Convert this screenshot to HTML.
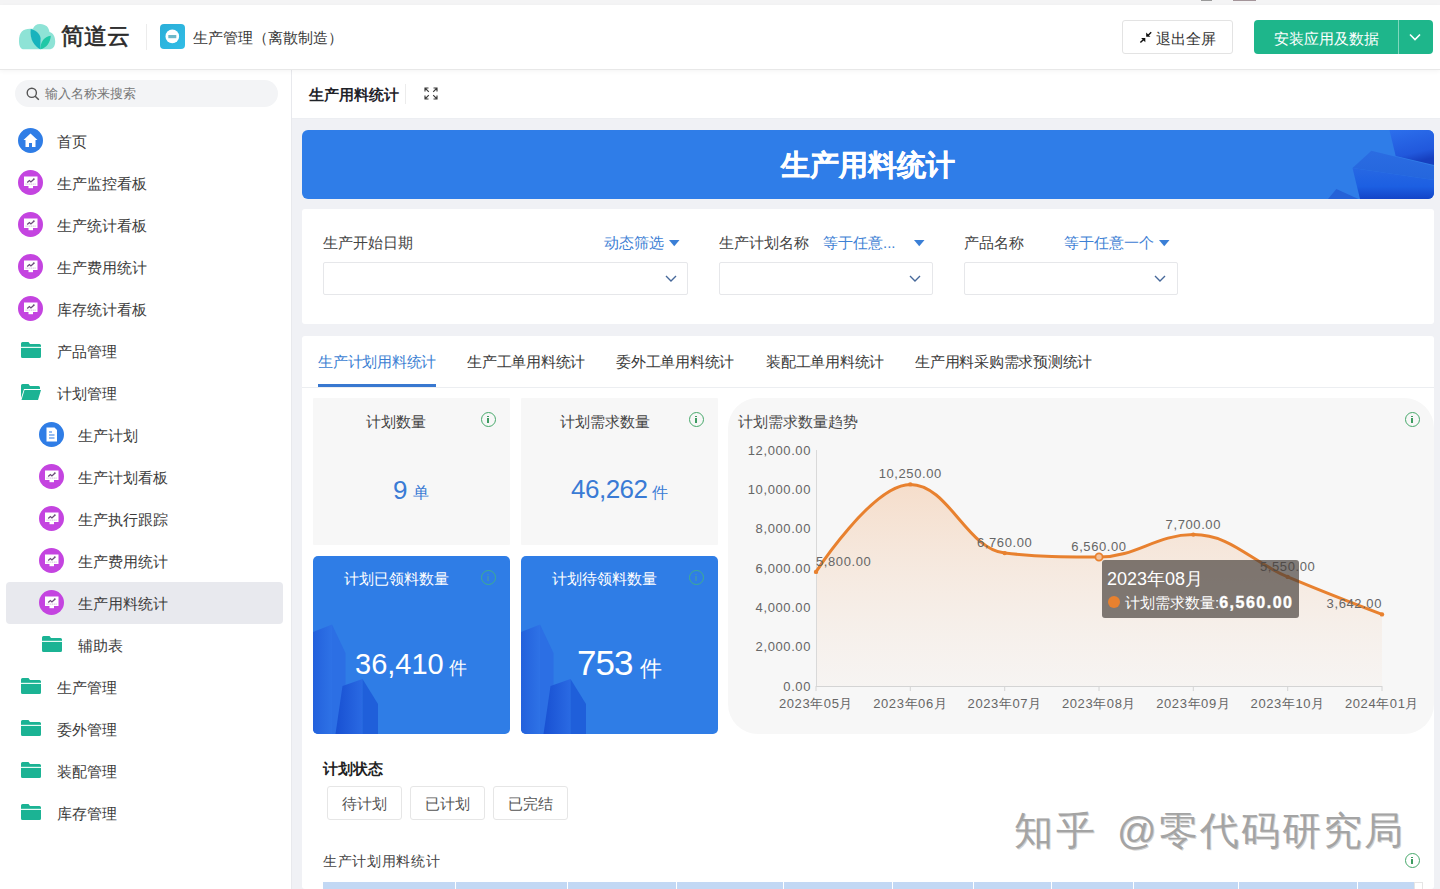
<!DOCTYPE html>
<html><head><meta charset="utf-8">
<style>
*{box-sizing:border-box;margin:0;padding:0}
html,body{width:1440px;height:889px;overflow:hidden;background:#fff;font-family:"Liberation Sans",sans-serif;color:#333}
div,span,svg{position:absolute}
.t{white-space:nowrap;line-height:1}
.side{font-size:15px;color:#3c3c3c}
.ic{width:25px;height:25px;border-radius:50%}
.pur{background:#c444e0}
.info{width:15px;height:15px;border:1.6px solid #47a96b;border-radius:50%}
.info:before{content:"";position:absolute;left:5.3px;top:2.6px;width:1.6px;height:1.6px;background:#3f9c62}
.info:after{content:"";position:absolute;left:5.3px;top:5.4px;width:1.6px;height:5px;background:#3f9c62}
.ax{font-size:13px;letter-spacing:0.6px;color:#666}
.binfo{border-color:#3fae8e}
.binfo:before,.binfo:after{background:#3d8fc0}
</style></head><body>
<div style="left:0;top:0;width:1440px;height:6px;background:#f4f4f5"></div>
<div style="left:1201px;top:0;width:11px;height:1px;background:#9a9a9a;z-index:5"></div><div style="left:1233px;top:0;width:23px;height:1px;background:#a4959a;z-index:5"></div>
<div style="left:0;top:5px;width:1440px;height:64px;background:#fff;box-shadow:0 1px 0 #e8e8e8,0 2px 5px rgba(0,0,0,0.05);z-index:3">
  <!-- logo -->
  <svg style="left:18px;top:18px" width="38" height="28" viewBox="18 23 38 28">
    <path d="M24 49.3 C20.5 49.3 19 46 19 41 C19 32 23 28.7 30 28.7 L33 28.7 C34 25.5 36.5 23.9 40 23.9 C46 23.9 49 27.5 49.5 32 C53.5 33 55.2 37 55.2 41.5 C55.2 46.5 53 49.3 49 49.3 Z" fill="#8ee3d6"/>
    <path d="M30.7 29 C34.5 29.8 39.5 32.5 40.6 38 L40.2 49.3 C34.5 46 29.6 40 30.7 29 Z" fill="#17b3bd"/>
    <path d="M40.2 49.3 C40.5 42 44 36.5 50.8 35.7 C50.6 42 46.5 48 40.2 49.3 Z" fill="#1fc8a6"/>
  </svg>
  <div class="t" style="left:61px;top:20px;font-size:23px;-webkit-text-stroke:0.6px #2b2b2b;color:#2b2b2b;letter-spacing:0px">简道云</div>
  <div style="left:146px;top:19px;width:1px;height:26px;background:#ececec"></div>
  <svg style="left:160px;top:19px" width="25" height="25" viewBox="0 0 25 25"><defs><linearGradient id="ai" x1="0" y1="0" x2="1" y2="1"><stop offset="0" stop-color="#2aaed8"/><stop offset="1" stop-color="#31bde6"/></linearGradient></defs><rect x="0" y="0" width="25" height="25" rx="4" fill="url(#ai)"/><circle cx="12.3" cy="12.4" r="6.8" fill="#fff"/><rect x="8.3" y="11" width="8" height="3.2" fill="#6fb9c9"/></svg>
  <div class="t" style="left:193px;top:25px;font-size:15px;color:#3a3a3a">生产管理（离散制造）</div>
  <!-- exit fullscreen -->
  <div style="left:1122px;top:15px;width:111px;height:34px;border:1px solid #e3e3e3;border-radius:3px;background:#fff">
    <svg style="left:15px;top:10px" width="14" height="13" viewBox="1138 31 14 13"><path d="M1151.2 32.2 L1148 35.4 M1140.4 42.6 L1143.6 39.4" stroke="#111" stroke-width="1.4" fill="none"/><path d="M1146.2 36.8 L1146.2 32.6 L1150.4 36.8 Z" fill="#111"/><path d="M1145.3 38.1 L1145.3 42.3 L1141.1 38.1 Z" fill="#111"/></svg>
    <div class="t" style="left:33px;top:10px;font-size:15px;color:#333">退出全屏</div>
  </div>
  <div style="left:1254px;top:15px;width:179px;height:34px;border-radius:4px;background:#1eb68b">
    <div class="t" style="left:20px;top:11px;font-size:15px;color:#fff">安装应用及数据</div>
    <div style="left:144px;top:0;width:1px;height:34px;background:#7fd7bd"></div>
    <svg style="left:155px;top:13px" width="12" height="8" viewBox="0 0 12 8"><path d="M1 1.5 L6 6.5 L11 1.5" stroke="#fff" stroke-width="1.6" fill="none"/></svg>
  </div>
</div>
<div style="left:0;top:69px;width:292px;height:820px;background:#fff;border-right:1px solid #e8e9ed">
</div>
<div style="left:15px;top:80px;width:263px;height:27px;border-radius:14px;background:#f3f4f6"></div>
<svg style="left:26px;top:87px" width="14" height="14" viewBox="0 0 14 14"><circle cx="5.8" cy="5.8" r="4.6" stroke="#555" stroke-width="1.4" fill="none"/><path d="M9.2 9.2 L12.8 12.8" stroke="#555" stroke-width="1.5"/></svg>
<div class="t" style="left:45px;top:87px;font-size:13px;color:#777">输入名称来搜索</div>
<div style="left:6px;top:582px;width:277px;height:42px;border-radius:4px;background:#e8e9ee"></div>
<div class="ic" style="left:18px;top:128px;background:#2f7de6"></div>
<svg style="left:18px;top:128px" width="25" height="25" viewBox="0 0 25 25"><path d="M12.5 5.5 L19.5 12 H17.5 V19 H14 V15 H11 V19 H7.5 V12 H5.5 Z" fill="#fff"/></svg>
<div class="t side" style="left:57px;top:134px">首页</div>
<div class="ic pur" style="left:18px;top:170px"></div>
<svg style="left:18px;top:170px" width="25" height="25" viewBox="0 0 25 25"><rect x="6" y="6.5" width="13.5" height="9.5" fill="#fff"/><rect x="10.5" y="16" width="4.5" height="2.2" fill="#fff"/><path d="M9.2 12.6 L11.4 10.6 L12.9 11.9 L15.6 9.4" stroke="#6a4c78" stroke-width="1.3" fill="none"/><circle cx="15.8" cy="9.2" r="0.9" fill="#6a4c78"/><path d="M7.5 14.1 H18" stroke="#cdb0d8" stroke-width="0.9" stroke-dasharray="1.2 0.6"/></svg>
<div class="t side" style="left:57px;top:176px">生产监控看板</div>
<div class="ic pur" style="left:18px;top:212px"></div>
<svg style="left:18px;top:212px" width="25" height="25" viewBox="0 0 25 25"><rect x="6" y="6.5" width="13.5" height="9.5" fill="#fff"/><rect x="10.5" y="16" width="4.5" height="2.2" fill="#fff"/><path d="M9.2 12.6 L11.4 10.6 L12.9 11.9 L15.6 9.4" stroke="#6a4c78" stroke-width="1.3" fill="none"/><circle cx="15.8" cy="9.2" r="0.9" fill="#6a4c78"/><path d="M7.5 14.1 H18" stroke="#cdb0d8" stroke-width="0.9" stroke-dasharray="1.2 0.6"/></svg>
<div class="t side" style="left:57px;top:218px">生产统计看板</div>
<div class="ic pur" style="left:18px;top:254px"></div>
<svg style="left:18px;top:254px" width="25" height="25" viewBox="0 0 25 25"><rect x="6" y="6.5" width="13.5" height="9.5" fill="#fff"/><rect x="10.5" y="16" width="4.5" height="2.2" fill="#fff"/><path d="M9.2 12.6 L11.4 10.6 L12.9 11.9 L15.6 9.4" stroke="#6a4c78" stroke-width="1.3" fill="none"/><circle cx="15.8" cy="9.2" r="0.9" fill="#6a4c78"/><path d="M7.5 14.1 H18" stroke="#cdb0d8" stroke-width="0.9" stroke-dasharray="1.2 0.6"/></svg>
<div class="t side" style="left:57px;top:260px">生产费用统计</div>
<div class="ic pur" style="left:18px;top:296px"></div>
<svg style="left:18px;top:296px" width="25" height="25" viewBox="0 0 25 25"><rect x="6" y="6.5" width="13.5" height="9.5" fill="#fff"/><rect x="10.5" y="16" width="4.5" height="2.2" fill="#fff"/><path d="M9.2 12.6 L11.4 10.6 L12.9 11.9 L15.6 9.4" stroke="#6a4c78" stroke-width="1.3" fill="none"/><circle cx="15.8" cy="9.2" r="0.9" fill="#6a4c78"/><path d="M7.5 14.1 H18" stroke="#cdb0d8" stroke-width="0.9" stroke-dasharray="1.2 0.6"/></svg>
<div class="t side" style="left:57px;top:302px">库存统计看板</div>
<svg style="left:21px;top:342px" width="20" height="16" viewBox="0 0 20 16"><path d="M0 1.5 Q0 0 1.5 0 H7.5 L9 2 H18.5 Q20 2 20 3.5 V14.5 Q20 16 18.5 16 H1.5 Q0 16 0 14.5 Z" fill="#1bb394"/><rect x="0" y="4.8" width="20" height="1.2" fill="#e6fbf4"/></svg>
<div class="t side" style="left:57px;top:344px">产品管理</div>
<svg style="left:21px;top:384px" width="20" height="16" viewBox="0 0 20 16"><path d="M0 1.5 Q0 0 1.5 0 H7.5 L9 2 H17.5 Q19 2 19 3.5 V5 H3 L0 14 Z" fill="#1bb394"/><path d="M3.5 6 H20 L17 16 H0.5 Z" fill="#1bb394"/></svg>
<div class="t side" style="left:57px;top:386px">计划管理</div>
<div class="ic" style="left:39px;top:422px;background:#2f7de6"></div>
<svg style="left:39px;top:422px" width="25" height="25" viewBox="0 0 25 25"><path d="M7.5 5.5 H15.5 L18 8 V19.5 H7.5 Z" fill="#fff"/><path d="M10 10 H13 M10 13 H15.5 M10 16 H15.5" stroke="#2f7de6" stroke-width="1.2"/></svg>
<div class="t side" style="left:78px;top:428px">生产计划</div>
<div class="ic pur" style="left:39px;top:464px"></div>
<svg style="left:39px;top:464px" width="25" height="25" viewBox="0 0 25 25"><rect x="6" y="6.5" width="13.5" height="9.5" fill="#fff"/><rect x="10.5" y="16" width="4.5" height="2.2" fill="#fff"/><path d="M9.2 12.6 L11.4 10.6 L12.9 11.9 L15.6 9.4" stroke="#6a4c78" stroke-width="1.3" fill="none"/><circle cx="15.8" cy="9.2" r="0.9" fill="#6a4c78"/><path d="M7.5 14.1 H18" stroke="#cdb0d8" stroke-width="0.9" stroke-dasharray="1.2 0.6"/></svg>
<div class="t side" style="left:78px;top:470px">生产计划看板</div>
<div class="ic pur" style="left:39px;top:506px"></div>
<svg style="left:39px;top:506px" width="25" height="25" viewBox="0 0 25 25"><rect x="6" y="6.5" width="13.5" height="9.5" fill="#fff"/><rect x="10.5" y="16" width="4.5" height="2.2" fill="#fff"/><path d="M9.2 12.6 L11.4 10.6 L12.9 11.9 L15.6 9.4" stroke="#6a4c78" stroke-width="1.3" fill="none"/><circle cx="15.8" cy="9.2" r="0.9" fill="#6a4c78"/><path d="M7.5 14.1 H18" stroke="#cdb0d8" stroke-width="0.9" stroke-dasharray="1.2 0.6"/></svg>
<div class="t side" style="left:78px;top:512px">生产执行跟踪</div>
<div class="ic pur" style="left:39px;top:548px"></div>
<svg style="left:39px;top:548px" width="25" height="25" viewBox="0 0 25 25"><rect x="6" y="6.5" width="13.5" height="9.5" fill="#fff"/><rect x="10.5" y="16" width="4.5" height="2.2" fill="#fff"/><path d="M9.2 12.6 L11.4 10.6 L12.9 11.9 L15.6 9.4" stroke="#6a4c78" stroke-width="1.3" fill="none"/><circle cx="15.8" cy="9.2" r="0.9" fill="#6a4c78"/><path d="M7.5 14.1 H18" stroke="#cdb0d8" stroke-width="0.9" stroke-dasharray="1.2 0.6"/></svg>
<div class="t side" style="left:78px;top:554px">生产费用统计</div>
<div class="ic pur" style="left:39px;top:590px"></div>
<svg style="left:39px;top:590px" width="25" height="25" viewBox="0 0 25 25"><rect x="6" y="6.5" width="13.5" height="9.5" fill="#fff"/><rect x="10.5" y="16" width="4.5" height="2.2" fill="#fff"/><path d="M9.2 12.6 L11.4 10.6 L12.9 11.9 L15.6 9.4" stroke="#6a4c78" stroke-width="1.3" fill="none"/><circle cx="15.8" cy="9.2" r="0.9" fill="#6a4c78"/><path d="M7.5 14.1 H18" stroke="#cdb0d8" stroke-width="0.9" stroke-dasharray="1.2 0.6"/></svg>
<div class="t side" style="left:78px;top:596px">生产用料统计</div>
<svg style="left:42px;top:636px" width="20" height="16" viewBox="0 0 20 16"><path d="M0 1.5 Q0 0 1.5 0 H7.5 L9 2 H18.5 Q20 2 20 3.5 V14.5 Q20 16 18.5 16 H1.5 Q0 16 0 14.5 Z" fill="#1bb394"/><rect x="0" y="4.8" width="20" height="1.2" fill="#e6fbf4"/></svg>
<div class="t side" style="left:78px;top:638px">辅助表</div>
<svg style="left:21px;top:678px" width="20" height="16" viewBox="0 0 20 16"><path d="M0 1.5 Q0 0 1.5 0 H7.5 L9 2 H18.5 Q20 2 20 3.5 V14.5 Q20 16 18.5 16 H1.5 Q0 16 0 14.5 Z" fill="#1bb394"/><rect x="0" y="4.8" width="20" height="1.2" fill="#e6fbf4"/></svg>
<div class="t side" style="left:57px;top:680px">生产管理</div>
<svg style="left:21px;top:720px" width="20" height="16" viewBox="0 0 20 16"><path d="M0 1.5 Q0 0 1.5 0 H7.5 L9 2 H18.5 Q20 2 20 3.5 V14.5 Q20 16 18.5 16 H1.5 Q0 16 0 14.5 Z" fill="#1bb394"/><rect x="0" y="4.8" width="20" height="1.2" fill="#e6fbf4"/></svg>
<div class="t side" style="left:57px;top:722px">委外管理</div>
<svg style="left:21px;top:762px" width="20" height="16" viewBox="0 0 20 16"><path d="M0 1.5 Q0 0 1.5 0 H7.5 L9 2 H18.5 Q20 2 20 3.5 V14.5 Q20 16 18.5 16 H1.5 Q0 16 0 14.5 Z" fill="#1bb394"/><rect x="0" y="4.8" width="20" height="1.2" fill="#e6fbf4"/></svg>
<div class="t side" style="left:57px;top:764px">装配管理</div>
<svg style="left:21px;top:804px" width="20" height="16" viewBox="0 0 20 16"><path d="M0 1.5 Q0 0 1.5 0 H7.5 L9 2 H18.5 Q20 2 20 3.5 V14.5 Q20 16 18.5 16 H1.5 Q0 16 0 14.5 Z" fill="#1bb394"/><rect x="0" y="4.8" width="20" height="1.2" fill="#e6fbf4"/></svg>
<div class="t side" style="left:57px;top:806px">库存管理</div>
<div style="left:292px;top:69px;width:1148px;height:820px;background:#f0f1f5"></div>
<div style="left:292px;top:69px;width:1148px;height:50px;background:#fff;border-bottom:1px solid #eceef2"></div>
<div class="t" style="left:309px;top:88px;font-size:14.5px;font-weight:bold;color:#1f2329">生产用料统计</div>
<div style="left:405px;top:84px;width:1px;height:20px;background:#ececec"></div>
<svg style="left:424px;top:87px" width="14" height="13" viewBox="0 0 14 13"><path d="M1 4.5 V1 H4.5 M1 1 L4.8 4.8 M9.5 1 H13 V4.5 M13 1 L9.2 4.8 M1 8.5 V12 H4.5 M1 12 L4.8 8.2 M13 8.5 V12 H9.5 M13 12 L9.2 8.2" stroke="#3a3a3a" stroke-width="1.15" fill="none"/></svg>
<!-- banner -->
<div style="left:302px;top:130px;width:1132px;height:69px;border-radius:6px;background:#2f7de8;overflow:hidden">
  <svg style="left:0;top:0" width="1132" height="69" viewBox="302 130 1132 69">
    <defs>
      <linearGradient id="bt1" x1="0" y1="0" x2="0.3" y2="1"><stop offset="0" stop-color="#2c6fec"/><stop offset="0.75" stop-color="#2158dc"/><stop offset="1" stop-color="#163fbf"/></linearGradient>
      <linearGradient id="bt2" x1="0" y1="0" x2="0" y2="1"><stop offset="0" stop-color="#2b6ce2"/><stop offset="1" stop-color="#2466dd"/></linearGradient>
      <linearGradient id="bt3" x1="0" y1="0" x2="0" y2="1"><stop offset="0" stop-color="#2768e3"/><stop offset="0.6" stop-color="#1c5fe2"/><stop offset="1" stop-color="#1344c8"/></linearGradient>
    </defs>
    <polygon points="1352.5,168 1371.4,150.8 1434,166 1434,180" fill="url(#bt2)"/>
    <polygon points="1352.5,168 1434,180 1434,199 1360,199" fill="url(#bt3)"/>
    <polygon points="1389.4,130 1434,130 1434,165 1395.7,156" fill="url(#bt1)"/>
    <polygon points="1328,199 1336.4,189 1358.3,199" fill="#2562d8"/>
  </svg>
  <div class="t" style="left:479px;top:21px;font-size:29px;font-weight:bold;color:#fff;-webkit-text-stroke:0.3px #fff">生产用料统计</div>
</div>
<!-- filter card -->
<div style="left:302px;top:209px;width:1132px;height:115px;background:#fff;border-radius:3px"></div>
<div class="t" style="left:323px;top:235px;font-size:15px;color:#444">生产开始日期</div>
<div class="t" style="left:604px;top:235px;font-size:15px;color:#3d80d4">动态筛选</div>
<svg style="left:668px;top:239px" width="12" height="8" viewBox="0 0 12 8"><path d="M1 1 H11.5 L6.25 7.3Z" fill="#3a7fd6"/></svg>
<div style="left:323px;top:262px;width:365px;height:33px;border:1px solid #e6e7ea;border-radius:2px"></div>
<svg style="left:665px;top:275px" width="12" height="8" viewBox="0 0 12 8"><path d="M1 1 L6 6 L11 1" stroke="#46689a" stroke-width="1.35" fill="none"/></svg>
<div class="t" style="left:719px;top:235px;font-size:15px;color:#444">生产计划名称</div>
<div class="t" style="left:823px;top:235px;font-size:15px;color:#3d80d4">等于任意...</div>
<svg style="left:913px;top:239px" width="12" height="8" viewBox="0 0 12 8"><path d="M1 1 H11.5 L6.25 7.3Z" fill="#3a7fd6"/></svg>
<div style="left:719px;top:262px;width:214px;height:33px;border:1px solid #e6e7ea;border-radius:2px"></div>
<svg style="left:909px;top:275px" width="12" height="8" viewBox="0 0 12 8"><path d="M1 1 L6 6 L11 1" stroke="#46689a" stroke-width="1.35" fill="none"/></svg>
<div class="t" style="left:964px;top:235px;font-size:15px;color:#444">产品名称</div>
<div class="t" style="left:1064px;top:235px;font-size:15px;color:#3d80d4">等于任意一个</div>
<svg style="left:1158px;top:239px" width="12" height="8" viewBox="0 0 12 8"><path d="M1 1 H11.5 L6.25 7.3Z" fill="#3a7fd6"/></svg>
<div style="left:964px;top:262px;width:214px;height:33px;border:1px solid #e6e7ea;border-radius:2px"></div>
<svg style="left:1154px;top:275px" width="12" height="8" viewBox="0 0 12 8"><path d="M1 1 L6 6 L11 1" stroke="#46689a" stroke-width="1.35" fill="none"/></svg>
<!-- tab card -->
<div style="left:302px;top:336px;width:1132px;height:553px;background:#fff;border-radius:3px"></div>
<div style="left:302px;top:387px;width:1132px;height:1px;background:#eceef1"></div>
<div class="t" style="left:318px;top:354px;font-size:15px;letter-spacing:-0.25px;color:#3c7fd3">生产计划用料统计</div>
<div style="left:318px;top:384px;width:118px;height:3px;background:#3878d0"></div>
<div class="t" style="left:467px;top:354px;font-size:15px;letter-spacing:-0.25px;color:#3a3a3a">生产工单用料统计</div>
<div class="t" style="left:616px;top:354px;font-size:15px;letter-spacing:-0.25px;color:#3a3a3a">委外工单用料统计</div>
<div class="t" style="left:766px;top:354px;font-size:15px;letter-spacing:-0.25px;color:#3a3a3a">装配工单用料统计</div>
<div class="t" style="left:915px;top:354px;font-size:15px;letter-spacing:-0.25px;color:#3a3a3a">生产用料采购需求预测统计</div>
<!-- stat cards -->
<div style="left:313px;top:398px;width:197px;height:147px;background:#f7f7f7;border-radius:1px"></div>
<div class="t" style="left:366px;top:414px;font-size:15px;color:#444">计划数量</div>
<div class="info" style="left:481px;top:412px"></div>
<div class="t" style="left:393px;top:477px;font-size:26px;color:#3a7bd5">9</div>
<div class="t" style="left:413px;top:485px;font-size:16px;color:#3a7bd5">单</div>
<div style="left:521px;top:398px;width:197px;height:147px;background:#f7f7f7;border-radius:1px"></div>
<div class="t" style="left:560px;top:414px;font-size:15px;color:#444">计划需求数量</div>
<div class="info" style="left:689px;top:412px"></div>
<div class="t" style="left:571px;top:476px;font-size:26px;letter-spacing:-0.5px;color:#3a7bd5">46,262</div>
<div class="t" style="left:652px;top:485px;font-size:16px;color:#3a7bd5">件</div>

<div style="left:313px;top:556px;width:197px;height:178px;background:#2f7de6;border-radius:5px;overflow:hidden">
  <svg style="left:0;top:0" width="197" height="178" viewBox="0 0 197 178">
    <defs><linearGradient id="gA" x1="0" y1="0" x2="1" y2="0"><stop offset="0" stop-color="#2361dc"/><stop offset="1" stop-color="#2e72e6"/></linearGradient>
    <linearGradient id="gB" x1="0" y1="0" x2="1" y2="0"><stop offset="0" stop-color="#1850d2"/><stop offset="1" stop-color="#2a6ae3"/></linearGradient></defs>
    <polygon points="0,76 19,68.5 19,178 0,178" fill="url(#gA)"/>
    <polygon points="19,68.5 32.5,97 32.5,178 19,178" fill="#2c6fe4"/>
    <polygon points="29.5,130 49.5,123 49.5,178 22.5,178" fill="url(#gB)"/>
    <polygon points="49.5,123 65,148 65,178 49.5,178" fill="#1f5fda"/>
  </svg>
</div>
<div class="t" style="left:344px;top:571px;font-size:15px;color:#fff">计划已领料数量</div>
<div class="info binfo" style="left:481px;top:570px"></div>
<div class="t" style="left:355px;top:650px;font-size:29px;color:#fff">36,410</div>
<div class="t" style="left:449px;top:659px;font-size:18px;color:#fff">件</div>

<div style="left:521px;top:556px;width:197px;height:178px;background:#2f7de6;border-radius:5px;overflow:hidden">
  <svg style="left:0;top:0" width="197" height="178" viewBox="0 0 197 178">
    <defs><linearGradient id="gA" x1="0" y1="0" x2="1" y2="0"><stop offset="0" stop-color="#2361dc"/><stop offset="1" stop-color="#2e72e6"/></linearGradient>
    <linearGradient id="gB" x1="0" y1="0" x2="1" y2="0"><stop offset="0" stop-color="#1850d2"/><stop offset="1" stop-color="#2a6ae3"/></linearGradient></defs>
    <polygon points="0,76 19,68.5 19,178 0,178" fill="url(#gA)"/>
    <polygon points="19,68.5 32.5,97 32.5,178 19,178" fill="#2c6fe4"/>
    <polygon points="29.5,130 49.5,123 49.5,178 22.5,178" fill="url(#gB)"/>
    <polygon points="49.5,123 65,148 65,178 49.5,178" fill="#1f5fda"/>
  </svg>
</div>
<div class="t" style="left:552px;top:571px;font-size:15px;color:#fff">计划待领料数量</div>
<div class="info binfo" style="left:689px;top:570px"></div>
<div class="t" style="left:577px;top:645px;font-size:35px;color:#fff;letter-spacing:-1px">753</div>
<div class="t" style="left:640px;top:658px;font-size:22px;color:#fff">件</div>
<div style="left:728px;top:398px;width:706px;height:336px;background:#f7f7f7;border-radius:30px"></div>
<div class="t" style="left:738px;top:414px;font-size:15px;color:#4a4a4a">计划需求数量趋势</div>
<div class="info" style="left:1405px;top:412px"></div>
<svg style="left:0;top:0" width="1440" height="889" viewBox="0 0 1440 889">
<defs><linearGradient id="ag" x1="0" y1="0" x2="0" y2="1"><stop offset="0" stop-color="#f4c6a2" stop-opacity="0.52"/><stop offset="1" stop-color="#f3ddcc" stop-opacity="0.12"/></linearGradient></defs>
<path d="M816.0,571.9 C816.0,571.9 872.6,484.4 910.3,484.4 C948.1,484.4 966.9,549.1 1004.7,553.1 C1042.4,557.0 1061.3,557.0 1099.0,557.0 C1136.7,557.0 1155.6,534.6 1193.3,534.6 C1231.1,534.6 1249.9,560.9 1287.7,576.9 C1325.4,592.8 1382.0,614.4 1382.0,614.4 L1382.0,686 L816.0,686 Z" fill="url(#ag)"/>
<path d="M816.5,450 V686" stroke="#d9d9d9" stroke-width="1"/>
<path d="M816,686.5 H1382" stroke="#d4d4d4" stroke-width="1"/>
<path d="M816.0,686 V691" stroke="#d4d4d4" stroke-width="1"/>
<path d="M910.3,686 V691" stroke="#d4d4d4" stroke-width="1"/>
<path d="M1004.7,686 V691" stroke="#d4d4d4" stroke-width="1"/>
<path d="M1099.0,686 V691" stroke="#d4d4d4" stroke-width="1"/>
<path d="M1193.3,686 V691" stroke="#d4d4d4" stroke-width="1"/>
<path d="M1287.7,686 V691" stroke="#d4d4d4" stroke-width="1"/>
<path d="M1382.0,686 V691" stroke="#d4d4d4" stroke-width="1"/>
<path d="M816.0,571.9 C816.0,571.9 872.6,484.4 910.3,484.4 C948.1,484.4 966.9,549.1 1004.7,553.1 C1042.4,557.0 1061.3,557.0 1099.0,557.0 C1136.7,557.0 1155.6,534.6 1193.3,534.6 C1231.1,534.6 1249.9,560.9 1287.7,576.9 C1325.4,592.8 1382.0,614.4 1382.0,614.4" fill="none" stroke="#e8812f" stroke-width="3" stroke-linejoin="round"/>
<circle cx="816.0" cy="571.9" r="2.2" fill="#e8812f"/>
<circle cx="910.3" cy="484.4" r="2.2" fill="#e8812f"/>
<circle cx="1004.7" cy="553.1" r="2.2" fill="#e8812f"/>
<circle cx="1099.0" cy="557.0" r="3.6" fill="#f3c39c" stroke="#e8812f" stroke-width="1.8"/>
<circle cx="1193.3" cy="534.6" r="2.2" fill="#e8812f"/>
<circle cx="1287.7" cy="576.9" r="2.2" fill="#e8812f"/>
<circle cx="1382.0" cy="614.4" r="2.2" fill="#e8812f"/>
</svg>
<div class="t ax" style="right:629px;top:679.5px">0.00</div>
<div class="t ax" style="right:629px;top:640.2px">2,000.00</div>
<div class="t ax" style="right:629px;top:600.8px">4,000.00</div>
<div class="t ax" style="right:629px;top:561.5px">6,000.00</div>
<div class="t ax" style="right:629px;top:522.2px">8,000.00</div>
<div class="t ax" style="right:629px;top:482.8px">10,000.00</div>
<div class="t ax" style="right:629px;top:443.5px">12,000.00</div>
<div class="t ax" style="left:776.0px;width:80px;text-align:center;top:697px">2023年05月</div>
<div class="t ax" style="left:870.3px;width:80px;text-align:center;top:697px">2023年06月</div>
<div class="t ax" style="left:964.7px;width:80px;text-align:center;top:697px">2023年07月</div>
<div class="t ax" style="left:1059.0px;width:80px;text-align:center;top:697px">2023年08月</div>
<div class="t ax" style="left:1153.3px;width:80px;text-align:center;top:697px">2023年09月</div>
<div class="t ax" style="left:1247.7px;width:80px;text-align:center;top:697px">2023年10月</div>
<div class="t ax" style="left:1342.0px;width:80px;text-align:center;top:697px">2024年01月</div>
<div class="t ax dl" style="left:816.0px;top:554.9px">5,800.00</div>
<div class="t ax dl" style="left:860.3px;width:100px;text-align:center;top:467.4px">10,250.00</div>
<div class="t ax dl" style="left:954.7px;width:100px;text-align:center;top:536.1px">6,760.00</div>
<div class="t ax dl" style="left:1049.0px;width:100px;text-align:center;top:540.0px">6,560.00</div>
<div class="t ax dl" style="left:1143.3px;width:100px;text-align:center;top:517.6px">7,700.00</div>
<div class="t ax dl" style="left:1237.7px;width:100px;text-align:center;top:559.9px">5,550.00</div>
<div class="t ax dl" style="right:58.0px;top:597.4px">3,642.00</div>
<div style="left:1102px;top:560px;width:197px;height:58px;border-radius:3px;background:rgba(70,62,58,0.68)"></div>
<div class="t" style="left:1107px;top:570px;font-size:18px;color:#fff">2023年08月</div>
<div style="left:1108px;top:596px;width:12px;height:12px;border-radius:50%;background:#e8812f"></div>
<div class="t" style="left:1125px;top:595px;font-size:15px;color:#fff">计划需求数量:<b style="font-size:16px;letter-spacing:1.5px;-webkit-text-stroke:0.4px #fff">6,560.00</b></div>
<div class="t" style="left:323px;top:761px;font-size:15px;font-weight:bold;color:#222">计划状态</div>
<div style="left:327px;top:786px;width:75px;height:34px;border:1px solid #e6e6e6;border-radius:3px"></div>
<div class="t" style="left:342px;top:796px;font-size:15px;color:#555">待计划</div>
<div style="left:410px;top:786px;width:75px;height:34px;border:1px solid #e6e6e6;border-radius:3px"></div>
<div class="t" style="left:425px;top:796px;font-size:15px;color:#555">已计划</div>
<div style="left:493px;top:786px;width:75px;height:34px;border:1px solid #e6e6e6;border-radius:3px"></div>
<div class="t" style="left:508px;top:796px;font-size:15px;color:#555">已完结</div>
<div class="t" style="left:323px;top:854px;font-size:14px;letter-spacing:0.7px;color:#444">生产计划用料统计</div>
<div class="info" style="left:1405px;top:853px"></div>
<div style="left:323px;top:882px;width:1091px;height:7px;background:#c2d8f4"></div>
<div style="left:455px;top:882px;width:1px;height:7px;background:#fff"></div>
<div style="left:567px;top:882px;width:1px;height:7px;background:#fff"></div>
<div style="left:676px;top:882px;width:1px;height:7px;background:#fff"></div>
<div style="left:783px;top:882px;width:1px;height:7px;background:#fff"></div>
<div style="left:892px;top:882px;width:1px;height:7px;background:#fff"></div>
<div style="left:973px;top:882px;width:1px;height:7px;background:#fff"></div>
<div style="left:1051px;top:882px;width:1px;height:7px;background:#fff"></div>
<div style="left:1133px;top:882px;width:1px;height:7px;background:#fff"></div>
<div style="left:1238px;top:882px;width:1px;height:7px;background:#fff"></div>
<div style="left:1357px;top:882px;width:1px;height:7px;background:#fff"></div>
<div style="left:1414px;top:882px;width:9px;height:7px;border:1px solid #e5e5e5;border-bottom:none"></div>
<!-- watermark -->
<div class="t" style="left:1014px;top:811px;font-size:39px;letter-spacing:3px;color:#a4a4a4;text-shadow:1px 1px 0 #d2d2d2">知乎</div>
<div class="t" style="left:1117px;top:811px;font-size:39px;letter-spacing:2px;color:#a4a4a4;text-shadow:1px 1px 0 #d2d2d2">@零代码研究局</div>
</body></html>
